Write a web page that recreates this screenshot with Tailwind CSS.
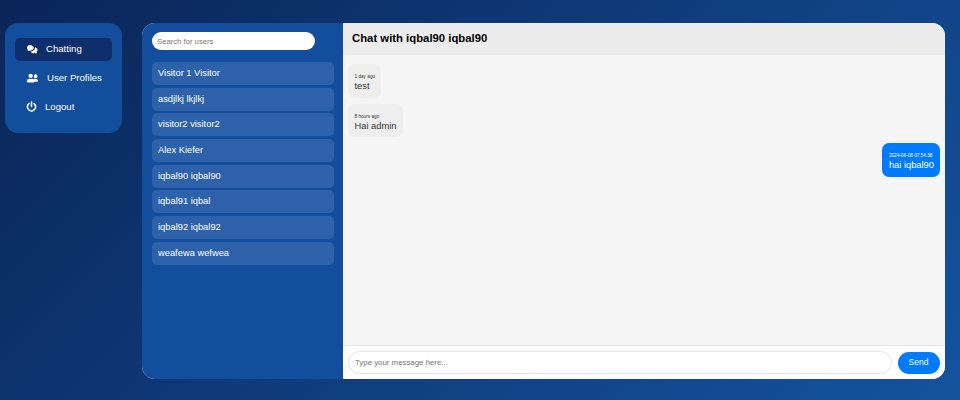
<!DOCTYPE html>
<html lang="en">
  <head>
    <meta charset="UTF-8" />
    <title>Chat</title>
    <script src="https://cdn.jsdelivr.net/npm/@tailwindcss/browser@4"></script>
  </head>
  <body class="w-[960px] h-[400px] overflow-hidden bg-[linear-gradient(135deg,#0a2558,#14539f)] font-['Liberation_Sans',sans-serif]">
    <div class="flex items-start gap-[20px] pl-[5px] pt-[23px]">
      <!-- Sidebar -->
      <nav class="w-[117px] h-[110px] rounded-[13px] bg-[#124e9c] px-[10px] pt-[15px] text-white text-[9.6px] leading-[15px]">
        <a class="flex items-center h-[23px] pb-[2px] rounded-[5px] bg-[#0e2f6c] pl-[11px]">
          <svg class="w-[12px] h-[10px]" viewBox="0 0 640 512" fill="currentColor"><path d="M208 352c-17 0-33-2-49-7-16 11-42 23-76 23-3 0-6-2-7-5s-1-6 1-9c1-1 22-24 32-51C71 277 48 242 48 208 48 120 120 48 208 48s208 72 208 160-120 144-208 144zM592 460c-10-27-31-50-32-51 34-25 56-60 56-97 0-68-57-126-136-147 1 9 2 17 2 26 0 106-106 192-240 207 30 48 91 82 166 82 20 0 39-3 56-8 16 11 42 24 76 24 3 0 6-2 7-5s1-7-1-10z"/></svg>
          <span class="ml-[8px]">Chatting</span>
        </a>
        <a class="flex items-center h-[23px] pb-[2px] mt-[6px] pl-[11px]">
          <svg class="w-[13px] h-[10px]" viewBox="0 0 640 512" fill="currentColor"><path d="M224 256a112 112 0 1 0 0-224 112 112 0 0 0 0 224zm77 32h-12c-21 10-44 16-65 16s-44-6-65-16h-12C83 288 32 339 32 403v37c0 22 18 40 40 40h304c22 0 40-18 40-40v-37c0-64-51-115-115-115zM480 256a96 96 0 1 0 0-192 96 96 0 0 0 0 192zm48 32h-4c-14 5-29 8-44 8s-30-3-44-8h-4c-20 0-39 6-55 16 25 27 41 62 41 99v38c0 2 0 5-1 7h143c22 0 40-18 40-40 0-66-53-120-120-120z"/></svg>
          <span class="ml-[8px]">User Profiles</span>
        </a>
        <a class="flex items-center h-[23px] pb-[2px] mt-[6px] pl-[11px]">
          <svg class="w-[11px] h-[11px]" viewBox="0 0 24 24" fill="none" stroke="currentColor" stroke-width="3.4" stroke-linecap="round"><path d="M12 2v10"/><path d="M6.5 5.5a9 9 0 1 0 11 0"/></svg>
          <span class="ml-[8px]">Logout</span>
        </a>
      </nav>

      <!-- Chat card -->
      <main class="flex w-[803px] h-[356px] rounded-[13px] overflow-hidden bg-white">
        <section class="w-[201px] bg-[#124e9c] px-[10px] pt-[9px]">
          <input placeholder="Search for users" class="block w-[163px] h-[18px] rounded-full bg-white px-[5px] text-[7.7px] text-black placeholder:text-[#757575] outline-none" />
          <ul class="mt-[12px] flex flex-col gap-[2.7px] text-white text-[9.33px]">
            <li class="w-[182px] h-[23px] pt-[1px] flex items-center rounded-[5px] bg-[#2d62aa] pl-[6px]">Visitor 1 Visitor</li>
            <li class="w-[182px] h-[23px] pt-[1px] flex items-center rounded-[5px] bg-[#2d62aa] pl-[6px]">asdjlkj lkjlkj</li>
            <li class="w-[182px] h-[23px] pt-[1px] flex items-center rounded-[5px] bg-[#2d62aa] pl-[6px]">visitor2 visitor2</li>
            <li class="w-[182px] h-[23px] pt-[1px] flex items-center rounded-[5px] bg-[#2d62aa] pl-[6px]">Alex Kiefer</li>
            <li class="w-[182px] h-[23px] pt-[1px] flex items-center rounded-[5px] bg-[#2d62aa] pl-[6px]">iqbal90 iqbal90</li>
            <li class="w-[182px] h-[23px] pt-[1px] flex items-center rounded-[5px] bg-[#2d62aa] pl-[6px]">iqbal91 iqbal</li>
            <li class="w-[182px] h-[23px] pt-[1px] flex items-center rounded-[5px] bg-[#2d62aa] pl-[6px]">iqbal92 iqbal92</li>
            <li class="w-[182px] h-[23px] pt-[1px] flex items-center rounded-[5px] bg-[#2d62aa] pl-[6px]">weafewa wefwea</li>
          </ul>
        </section>

        <section class="flex-1 flex flex-col">
          <header class="h-[32px] pb-[1px] flex items-center bg-[#ececec] pl-[9px] text-[11.33px] font-bold text-black">Chat with iqbal90 iqbal90</header>
          <div class="flex-1 flex flex-col gap-[6px] bg-[#f5f5f5] px-[5px] pt-[9px]">
            <div class="self-start rounded-[7px] bg-[#eeeeee] pl-[6.5px] pr-[6px] pt-[10px] pb-[5.5px] text-[#333]">
              <div class="text-[4.7px] leading-[6px]">1 day ago</div>
              <div class="text-[9.33px] leading-[12px]">test</div>
            </div>
            <div class="self-start rounded-[7px] bg-[#eeeeee] pl-[6.5px] pr-[6px] pt-[10px] pb-[5.5px] text-[#333]">
              <div class="text-[4.7px] leading-[6px]">8 hours ago</div>
              <div class="text-[9.33px] leading-[12px]">Hai admin</div>
            </div>
            <div class="self-end rounded-[7px] bg-[#007bff] pl-[6.5px] pr-[6px] pt-[10px] pb-[5.5px] text-white">
              <div class="text-[4.7px] leading-[6px]">2024-06-08 07:54:38</div>
              <div class="text-[9.33px] leading-[12px]">hai iqbal90</div>
            </div>
          </div>
          <footer class="h-[34px] flex items-center gap-[6px] border-t border-[#e5e5e5] bg-white px-[5px]">
            <input placeholder="Type your message here..." class="w-[543.5px] h-[23px] rounded-full border border-[#e3e3e3] px-[6px] text-[7.85px] placeholder:text-[#757575] outline-none" />
            <button class="w-[42px] h-[22px] rounded-full bg-[#007bff] text-white text-[8.5px]">Send</button>
          </footer>
        </section>
      </main>
    </div>
  </body>
</html>
